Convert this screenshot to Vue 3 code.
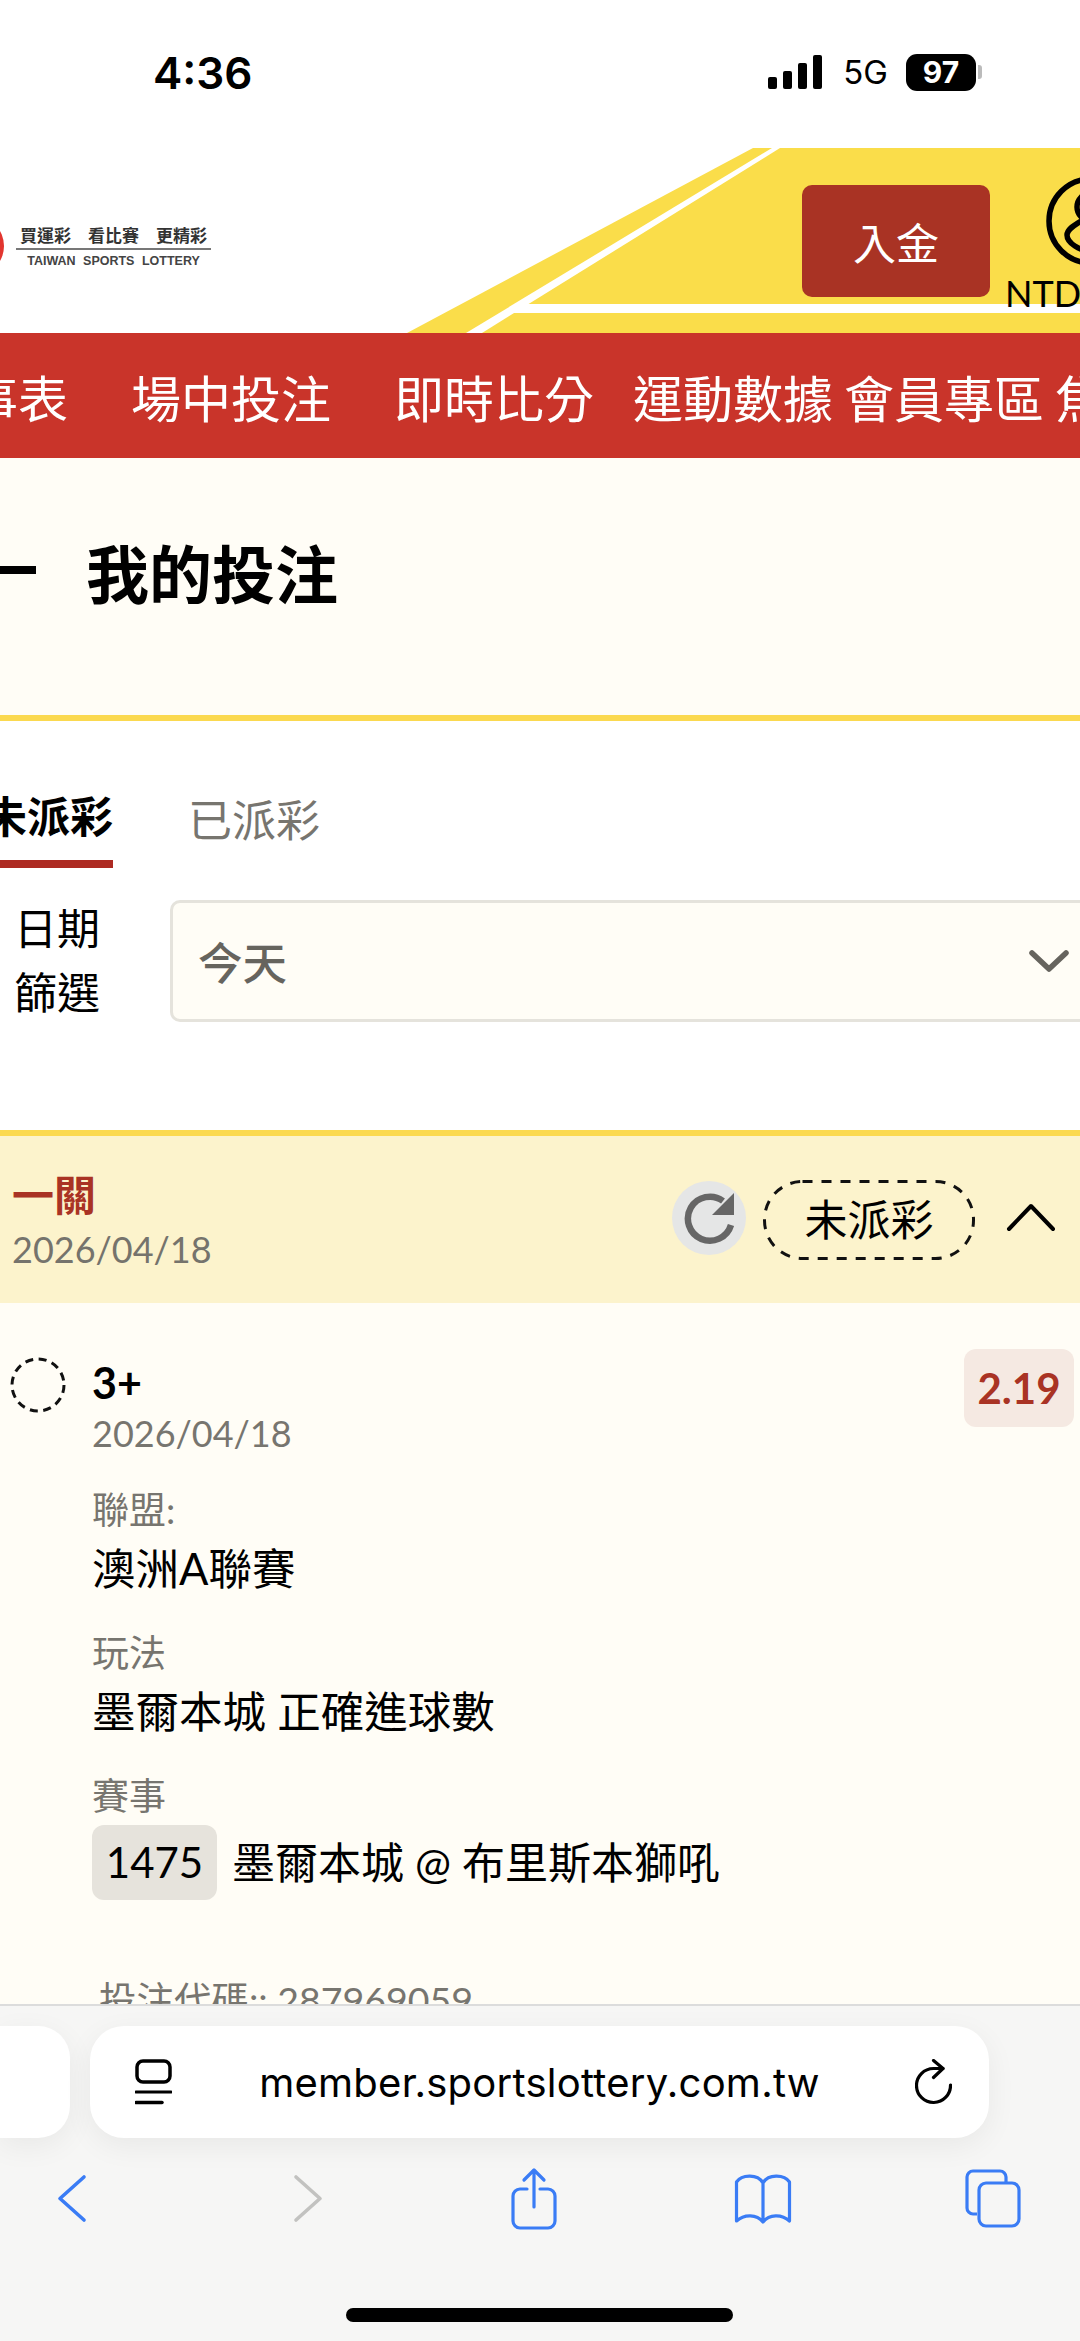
<script setup>
const navItems = [
  { label: '賽事表', cls: 'first' },
  { label: '場中投注', cls: 'gap-wide' },
  { label: '即時比分', cls: 'gap-wide' },
  { label: '運動數據', cls: 'gap-mid' },
  { label: '會員專區', cls: 'gap-small' },
  { label: '焦點', cls: 'gap-small' }
]

const fields = [
  { label: '聯盟:', value: '澳洲A聯賽' },
  { label: '玩法', value: '墨爾本城 正確進球數' }
]
</script>

<template>
  <div class="screen">
    <div class="page">
      <div class="status-bar">
        <span class="time">4:36</span>
        <div class="status-right">
          <svg class="signal" width="56" height="36" viewBox="0 0 56 36">
            <rect x="0" y="23" width="9" height="12" rx="2" />
            <rect x="15" y="17" width="9" height="18" rx="2" />
            <rect x="30" y="9" width="9" height="26" rx="2" />
            <rect x="45" y="1" width="9" height="34" rx="2" />
          </svg>
          <span class="network">5G</span>
          <span class="battery">97</span>
          <span class="battery-cap"></span>
        </div>
      </div>

      <header class="header">
        <svg class="header-bg" width="1080" height="185" viewBox="0 0 1080 185">
          <polygon points="407,185 753,0 1080,0 1080,185" fill="#fadd4a" />
          <polygon points="466,185 482,185 780,0 772,0" fill="#fff" />
          <polygon points="527,156 1080,156 1080,165 510,165" fill="#fff" />
        </svg>
        <div class="logo">
          <span class="logo-mark"></span>
          <div class="logo-text">
            <div class="logo-slogan"><span>買運彩</span><span>看比賽</span><span>更精彩</span></div>
            <div class="logo-en">TAIWAN SPORTS LOTTERY</div>
          </div>
        </div>
        <button class="deposit">入金</button>
        <div class="account">
          <svg class="user-icon" width="90" height="92" viewBox="0 0 90 92">
            <circle cx="45" cy="46" r="42" fill="none" stroke="#000" stroke-width="5.5" />
            <circle cx="45" cy="32" r="14" fill="none" stroke="#000" stroke-width="5.5" />
            <path d="M35 46 C29 50 21 54 21 60 C21 68 34 76 45 76" fill="none" stroke="#000" stroke-width="5.5" />
          </svg>
          <span class="currency">NTD</span>
        </div>
      </header>

      <nav class="nav">
        <a v-for="item in navItems" :key="item.label" :class="item.cls">{{ item.label }}</a>
      </nav>

      <div class="title-band">
        <span class="title-dash"></span>
        <h1>我的投注</h1>
      </div>

      <div class="tabs">
        <span class="tab active">未派彩</span>
        <span class="tab">已派彩</span>
      </div>

      <div class="filter">
        <label>日期<br />篩選</label>
        <div class="select">
          <span>今天</span>
          <svg width="42" height="24" viewBox="0 0 42 24">
            <path d="M4 4 L21 20 L38 4" fill="none" stroke="#66645e" stroke-width="5.5" stroke-linecap="round" stroke-linejoin="round" />
          </svg>
        </div>
      </div>

      <section class="bet">
        <div class="bet-head">
          <div class="bet-title">
            <strong>一關</strong>
            <span>2026/04/18</span>
          </div>
          <div class="bet-actions">
            <span class="refresh">
              <svg width="54" height="54" viewBox="0 0 54 54">
                <path d="M49 34 A22 22 0 1 1 41 10" fill="none" stroke="#666" stroke-width="6.5" />
                <polygon points="52,2 52,24 30,24" fill="#666" />
              </svg>
            </span>
            <span class="state">
              <svg class="state-border" width="212" height="80" viewBox="0 0 212 80">
                <rect x="1.5" y="1.5" width="209" height="77" rx="38" fill="none" stroke="#111" stroke-width="3" stroke-dasharray="10 9" />
              </svg>
              未派彩
            </span>
            <svg class="caret" width="50" height="32" viewBox="0 0 50 32">
              <path d="M3 27 L25 4 L47 27" fill="none" stroke="#000" stroke-width="4" stroke-linecap="round" stroke-linejoin="round" />
            </svg>
          </div>
        </div>

        <div class="bet-body">
          <svg class="pending-dot" width="56" height="56" viewBox="0 0 56 56">
            <circle cx="28" cy="28" r="26" fill="none" stroke="#111" stroke-width="3" stroke-dasharray="8 5.6" />
          </svg>
          <div class="bet-info">
            <div class="pick">3+</div>
            <div class="muted pick-date">2026/04/18</div>
            <div v-for="f in fields" :key="f.label" class="field">
              <div class="muted">{{ f.label }}</div>
              <div class="value">{{ f.value }}</div>
            </div>
            <div class="field">
              <div class="muted">賽事</div>
              <div class="match">
                <span class="match-no">1475</span>
                <span class="value">墨爾本城 @ 布里斯本獅吼</span>
              </div>
            </div>
            <div class="muted code">投注代碼:: 287969059</div>
          </div>
          <span class="odds">2.19</span>
        </div>
      </section>
    </div>

    <footer class="toolbar">
      <div class="address-row">
        <div class="prev-tab"></div>
        <div class="address">
          <svg width="37" height="46" viewBox="0 0 37 46">
            <rect x="2" y="2" width="33" height="21" rx="6" fill="none" stroke="#000" stroke-width="3.5" />
            <path d="M1 33 H36" stroke="#000" stroke-width="3" stroke-linecap="round" />
            <path d="M1 43.5 H27" stroke="#000" stroke-width="3.5" stroke-linecap="round" />
          </svg>
          <span class="url">member.sportslottery.com.tw</span>
          <svg width="37" height="46" viewBox="0 0 37 46">
            <path d="M35.5 26 A17 17 0 1 1 18.5 9.5 H28" fill="none" stroke="#000" stroke-width="3.2" stroke-linecap="round" />
            <path d="M18.5 1.5 L28 9.5 L18.5 18.5" fill="none" stroke="#000" stroke-width="3.2" stroke-linecap="round" stroke-linejoin="round" />
          </svg>
        </div>
      </div>
      <div class="tool-icons">
        <svg class="back" width="30" height="49" viewBox="0 0 30 49">
          <path d="M27 3 L3 24.5 L27 46" fill="none" stroke="#3a7cf5" stroke-width="3.6" stroke-linecap="round" stroke-linejoin="round" />
        </svg>
        <svg class="forward" width="30" height="49" viewBox="0 0 30 49">
          <path d="M3 3 L27 24.5 L3 46" fill="none" stroke="#c2c2c0" stroke-width="3.6" stroke-linecap="round" stroke-linejoin="round" />
        </svg>
        <svg class="share" width="46" height="63" viewBox="0 0 46 63">
          <path d="M23 3 V40 M13 13 L23 3 L33 13" fill="none" stroke="#3a7cf5" stroke-width="3.2" stroke-linecap="round" stroke-linejoin="round" />
          <path d="M16 22 H9 A7 7 0 0 0 2 29 V54 A7 7 0 0 0 9 61 H37 A7 7 0 0 0 44 54 V29 A7 7 0 0 0 37 22 H29" fill="none" stroke="#3a7cf5" stroke-width="3.2" stroke-linecap="round" />
        </svg>
        <svg class="book" width="58" height="52" viewBox="0 0 58 52">
          <path d="M29 10 C24 1 8 1 2.5 9 V48 C10 41 23 41 29 49 C35 41 48 41 55.5 48 V9 C50 1 34 1 29 10 V48" fill="none" stroke="#3a7cf5" stroke-width="3.2" stroke-linejoin="round" stroke-linecap="round" />
        </svg>
        <svg class="tabs-icon" width="56" height="59" viewBox="0 0 56 59">
          <path d="M12 45 H8 A6 6 0 0 1 2 39 V8 A6 6 0 0 1 8 2 H35 A6 6 0 0 1 41 8 V14" fill="none" stroke="#3a7cf5" stroke-width="3.2" />
          <rect x="14" y="14" width="40" height="43" rx="7" fill="none" stroke="#3a7cf5" stroke-width="3.2" />
        </svg>
      </div>
      <div class="home-bar"></div>
    </footer>
  </div>
</template>

<style scoped>
.screen {
  width: 1080px;
  height: 2341px;
  display: flex;
  flex-direction: column;
  overflow: hidden;
  background: #fff;
  font-family: Lato, "Noto Sans CJK TC", sans-serif;
  color: #000;
}

.page {
  height: 2004px;
  flex: none;
  overflow: hidden;
}

.status-bar {
  height: 148px;
  display: flex;
  justify-content: space-between;
  padding: 48px 98px 0 153px;
  box-sizing: border-box;
  font-family: Inter, sans-serif;
}

.time {
  font-size: 44px;
  font-weight: 600;
  line-height: 50px;
}

.status-right {
  height: 40px;
  margin-top: 4px;
  display: flex;
  align-items: center;
}

.signal {
  fill: #000;
  margin-right: 19px;
}

.network {
  font-size: 33px;
  font-weight: 400;
  margin-right: 18px;
}

.battery {
  width: 70px;
  height: 37px;
  border-radius: 11px;
  background: #000;
  color: #fff;
  font-size: 30px;
  font-weight: 700;
  line-height: 37px;
  text-align: center;
}

.battery-cap {
  width: 4px;
  height: 14px;
  margin-left: 2px;
  border-radius: 0 3px 3px 0;
  background: #bbb;
}

.header {
  position: relative;
  height: 185px;
  display: flex;
  align-items: flex-start;
}

.header-bg {
  position: absolute;
  left: 0;
  top: 0;
}

.logo {
  position: relative;
  flex: none;
  display: flex;
  align-items: center;
  width: 802px;
  margin-top: 68px;
}

.logo-mark {
  width: 60px;
  height: 60px;
  margin-left: -56px;
  border-radius: 50%;
  background: #e2352f;
}

.logo-text {
  margin-left: 12px;
  width: 195px;
  color: #333;
}

.logo-slogan {
  display: flex;
  justify-content: space-between;
  padding: 0 4px;
  font-size: 17px;
  font-weight: 700;
  line-height: 24px;
  border-bottom: 2px solid #777;
}

.logo-en {
  padding-top: 3px;
  font-family: "Liberation Sans", sans-serif;
  font-size: 12.5px;
  font-weight: 700;
  word-spacing: 4px;
  color: #444;
  text-align: center;
  line-height: 16px;
  white-space: nowrap;
}

.deposit {
  position: relative;
  flex: none;
  width: 188px;
  height: 112px;
  margin-top: 37px;
  padding: 0;
  border: 0;
  border-radius: 10px;
  background: #a93324;
  color: #fff;
  font-family: inherit;
  font-size: 43px;
}

.account {
  position: relative;
  flex: none;
  width: 90px;
  margin-left: 15px;
  margin-top: 27px;
  white-space: nowrap;
}

.user-icon {
  display: block;
  margin-left: 41px;
}

.currency {
  display: block;
  margin-top: 6px;
  font-size: 36px;
  line-height: 40px;
}

.nav {
  height: 125px;
  display: flex;
  align-items: center;
  background: #c9342a;
  color: #fff;
  font-size: 50px;
  white-space: nowrap;
  overflow: hidden;
}

.nav a { flex: none; }
.nav .first { margin-left: -82px; }
.nav .gap-wide { margin-left: 63px; }
.nav .gap-mid { margin-left: 39px; }
.nav .gap-small { margin-left: 11px; }

.title-band {
  height: 257px;
  box-sizing: border-box;
  display: flex;
  align-items: center;
  padding-bottom: 33px;
  background: #fffdf6;
}

.title-dash {
  width: 36px;
  height: 8px;
  background: #000;
}

.title-band h1 {
  margin: 0 0 0 50px;
  font-size: 63px;
  font-weight: 700;
}

.tabs {
  height: 153px;
  box-sizing: border-box;
  display: flex;
  align-items: flex-end;
  border-top: 6px solid #fbd94f;
  font-size: 43px;
}

.tab {
  padding-bottom: 18px;
  color: #77756f;
  font-size: 44px;
  line-height: 60px;
  margin-left: 75px;
}

.tab.active {
  margin-left: -16px;
  padding-bottom: 13px;
  border-bottom: 8px solid #ad2a22;
  color: #000;
  font-size: 43px;
  font-weight: 700;
}

.filter {
  display: flex;
  align-items: center;
  height: 163px;
  margin-top: 11px;
}

.filter label {
  width: 170px;
  flex: none;
  box-sizing: border-box;
  padding-left: 14px;
  font-size: 43px;
  line-height: 64px;
}

.select {
  flex: none;
  width: 920px;
  height: 122px;
  box-sizing: border-box;
  display: flex;
  align-items: center;
  justify-content: space-between;
  padding: 0 17px 0 25px;
  border: 3px solid #e5e3dc;
  border-radius: 10px;
  background: #fffdf6;
  color: #66645e;
  font-size: 44.5px;
  font-weight: 500;
}

.bet {
  margin-top: 88px;
  padding-bottom: 100px;
  background: #fffdf6;
}

.bet-head {
  height: 173px;
  box-sizing: border-box;
  display: flex;
  align-items: center;
  justify-content: space-between;
  padding: 0 24px 0 12px;
  border-top: 6px solid #fbd94f;
  background: #fcf3cc;
}

.bet-title {
  display: flex;
  flex-direction: column;
  padding-top: 2px;
}

.bet-title strong {
  color: #a93324;
  font-size: 42px;
  line-height: 56px;
}

.bet-title span {
  color: #75736c;
  font-size: 36px;
  line-height: 50px;
  margin-top: 1px;
}

.bet-actions {
  display: flex;
  align-items: center;
}

.refresh {
  width: 74px;
  height: 74px;
  margin-top: -4px;
  border-radius: 50%;
  background: #e5e6e6;
  display: flex;
  align-items: center;
  justify-content: center;
}

.state {
  position: relative;
  width: 212px;
  height: 80px;
  margin-left: 17px;
  font-size: 43px;
  line-height: 80px;
  text-align: center;
}

.state-border {
  position: absolute;
  left: 0;
  top: 0;
}

.caret {
  margin-left: 31px;
  margin-top: -3px;
}

.bet-body {
  display: flex;
  align-items: flex-start;
  padding: 46px 6px 0 10px;
}

.pending-dot {
  flex: none;
  margin-top: 8px;
}

.bet-info {
  flex: 1;
  margin-left: 26px;
}

.pick {
  font-size: 43px;
  font-weight: 700;
  line-height: 56px;
  margin-top: 6px;
}

.muted {
  color: #77756f;
  font-size: 37px;
  line-height: 50px;
}

.pick-date {
  font-size: 36px;
  line-height: 44px;
  margin-top: 0;
}

.field {
  margin-top: 30px;
}

.value {
  font-size: 43.5px;
  line-height: 60px;
  margin-top: 3px;
}

.match {
  display: flex;
  align-items: center;
  margin-top: 4px;
}

.match-no {
  width: 125px;
  height: 75px;
  border-radius: 12px;
  background: #e6e3dc;
  font-size: 42px;
  line-height: 75px;
  text-align: center;
}

.match .value {
  margin: 0 0 0 15px;
  font-size: 43px;
}

.code {
  margin: 75px 0 0 7px;
  font-size: 37.5px;
}

.odds {
  flex: none;
  width: 110px;
  height: 78px;
  margin-top: 0;
  border-radius: 12px;
  background: #f5e9e2;
  color: #a93324;
  font-size: 42px;
  font-weight: 700;
  line-height: 78px;
  text-align: center;
}

.toolbar {
  flex: 1;
  background: #f6f6f5;
  border-top: 2px solid #dcdcdc;
  box-sizing: border-box;
}

.address-row {
  display: flex;
  margin-top: 20px;
  gap: 20px;
}

.prev-tab {
  flex: none;
  width: 70px;
  height: 112px;
  border-radius: 0 32px 32px 0;
  background: #fff;
  box-shadow: 0 8px 30px rgba(0, 0, 0, 0.06);
}

.address {
  flex: none;
  width: 899px;
  height: 112px;
  box-sizing: border-box;
  display: flex;
  align-items: center;
  padding: 0 37px 0 45px;
  border-radius: 34px;
  background: #fff;
  box-shadow: 0 8px 30px rgba(0, 0, 0, 0.06);
}

.url {
  flex: 1;
  margin-right: 8px;
  font-family: Inter, sans-serif;
  font-size: 40px;
  letter-spacing: 0.25px;
  text-align: center;
  white-space: nowrap;
}

.tool-icons {
  height: 63px;
  display: flex;
  align-items: center;
  margin-top: 29px;
  padding-left: 57px;
}

.forward { margin-left: 206px; }
.share { margin-left: 188px; }
.book { margin-left: 177px; }
.tabs-icon { margin-left: 173px; }

.home-bar {
  width: 387px;
  height: 14px;
  margin: 78px 0 0 346px;
  border-radius: 7px;
  background: #000;
}
</style>

<style>
html, body {
  margin: 0;
  background: #fff;
}
</style>
